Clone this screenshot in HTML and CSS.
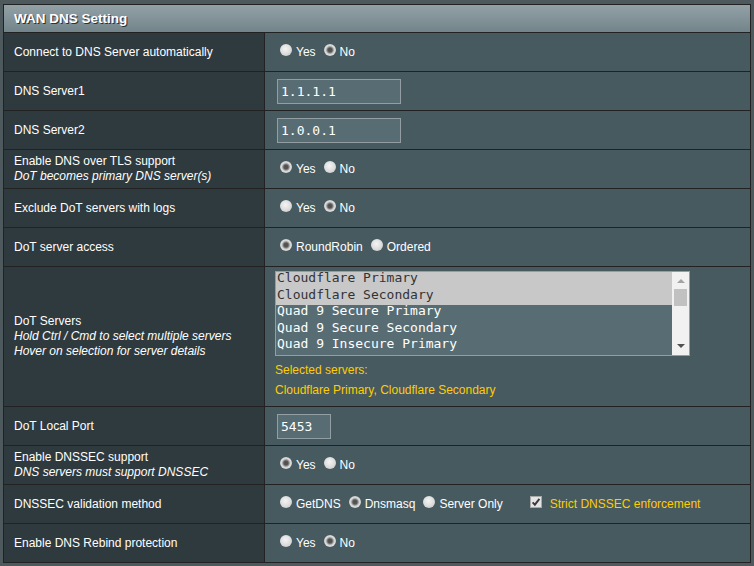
FILE: index.html
```html
<!DOCTYPE html>
<html>
<head>
<meta charset="utf-8">
<title>WAN DNS Setting</title>
<link rel="stylesheet" href="styles.css">
</head>
<body>
<div class="page">
  <div class="form">
    <div class="head">WAN DNS Setting</div>

    <div class="row">
      <div class="lbl">Connect to DNS Server automatically</div>
      <div class="val">
        <label class="opt"><input type="radio" name="auto">Yes</label>
        <label class="opt"><input type="radio" name="auto" checked>No</label>
      </div>
    </div>

    <div class="row">
      <div class="lbl">DNS Server1</div>
      <div class="val"><input class="txt ip" type="text" value="1.1.1.1"></div>
    </div>

    <div class="row">
      <div class="lbl">DNS Server2</div>
      <div class="val"><input class="txt ip" type="text" value="1.0.0.1"></div>
    </div>

    <div class="row">
      <div class="lbl">Enable DNS over TLS support<span class="hint">DoT becomes primary DNS server(s)</span></div>
      <div class="val">
        <label class="opt"><input type="radio" name="dot" checked>Yes</label>
        <label class="opt"><input type="radio" name="dot">No</label>
      </div>
    </div>

    <div class="row">
      <div class="lbl">Exclude DoT servers with logs</div>
      <div class="val">
        <label class="opt"><input type="radio" name="logs">Yes</label>
        <label class="opt"><input type="radio" name="logs" checked>No</label>
      </div>
    </div>

    <div class="row">
      <div class="lbl">DoT server access</div>
      <div class="val">
        <label class="opt"><input type="radio" name="access" checked>RoundRobin</label>
        <label class="opt"><input type="radio" name="access">Ordered</label>
      </div>
    </div>

    <div class="row tall">
      <div class="lbl">DoT Servers<span class="hint">Hold Ctrl / Cmd to select multiple servers</span><span class="hint">Hover on selection for server details</span></div>
      <div class="val stack">
        <div class="list">
          <div class="items">
            <div class="item sel">Cloudflare Primary</div>
            <div class="item sel">Cloudflare Secondary</div>
            <div class="item">Quad 9 Secure Primary</div>
            <div class="item">Quad 9 Secure Secondary</div>
            <div class="item">Quad 9 Insecure Primary</div>
          </div>
          <div class="sb">
            <span class="arrow-up"></span>
            <span class="thumb"></span>
            <span class="arrow-down"></span>
          </div>
        </div>
        <div class="note">Selected servers:</div>
        <div class="note">Cloudflare Primary, Cloudflare Secondary</div>
      </div>
    </div>

    <div class="row">
      <div class="lbl">DoT Local Port</div>
      <div class="val"><input class="txt port" type="text" value="5453"></div>
    </div>

    <div class="row">
      <div class="lbl">Enable DNSSEC support<span class="hint">DNS servers must support DNSSEC</span></div>
      <div class="val">
        <label class="opt"><input type="radio" name="sec" checked>Yes</label>
        <label class="opt"><input type="radio" name="sec">No</label>
      </div>
    </div>

    <div class="row">
      <div class="lbl">DNSSEC validation method</div>
      <div class="val">
        <label class="opt"><input type="radio" name="method">GetDNS</label>
        <label class="opt"><input type="radio" name="method" checked>Dnsmasq</label>
        <label class="opt"><input type="radio" name="method">Server Only</label>
        <label class="check">
          <svg class="box" width="12" height="12" viewBox="0 0 12 12"><rect x="0.5" y="0.5" width="11" height="11" fill="#e4e4e4" stroke="#a8a8a8"/><path d="M2.6 6.3 L4.9 8.7 L9.4 2.9" fill="none" stroke="#3a3a3a" stroke-width="1.9"/></svg>
          <span class="warn">Strict DNSSEC enforcement</span>
        </label>
      </div>
    </div>

    <div class="row last">
      <div class="lbl">Enable DNS Rebind protection</div>
      <div class="val">
        <label class="opt"><input type="radio" name="rebind">Yes</label>
        <label class="opt"><input type="radio" name="rebind" checked>No</label>
      </div>
    </div>
  </div>
</div>
</body>
</html>
```

FILE: styles.css
```css
html, body {
  margin: 0;
  padding: 0;
  background: #4D595D;
}

body {
  font-family: "Liberation Sans", Arial, sans-serif;
  font-size: 12px;
  color: #fff;
}

.page {
  padding: 4px 0 0 3px;
}

.form {
  width: 748px;
  box-sizing: border-box;
  border: 1px solid #222;
}

.head {
  height: 27px;
  display: flex;
  align-items: center;
  padding-left: 10px;
  font-size: 13.5px;
  font-weight: bold;
  color: #fff;
  text-shadow: 1px 1px 0 #2a3236;
  background: linear-gradient(to bottom, #93A1A6, #72848A);
  border-bottom: 1px solid #222;
}

.row {
  display: flex;
  height: 39px;
  box-sizing: border-box;
  border-bottom: 1px solid #222;
}

.row.last {
  height: 38px;
  border-bottom: none;
}

.row.tall {
  height: 140px;
}

.lbl {
  width: 261px;
  box-sizing: border-box;
  border-right: 1px solid #222;
  background: #2F3A3E;
  padding: 0 10px;
  display: flex;
  flex-direction: column;
  justify-content: center;
  line-height: 15px;
}

.hint {
  font-style: italic;
}

.val {
  flex: 1;
  background: #475A5F;
  padding: 0 10px;
  display: flex;
  align-items: center;
}

.opt {
  display: inline-flex;
  align-items: center;
  margin-right: 3px;
  white-space: nowrap;
}

.opt input {
  -webkit-appearance: none;
  appearance: none;
  width: 12px;
  height: 12px;
  margin: 0 4px 4px 5px;
  border-radius: 50%;
  background: radial-gradient(circle at 45% 40%, #f4f4f4 0, #dcdcdc 55%, #bcbcbc 100%);
}

.opt input:checked {
  background: radial-gradient(circle at 50% 50%, #4f4f4f 0, #555 2px, #8a8a8a 3px, #d2d2d2 4.2px, #dedede 5.2px, #c4c4c4 6px);
}

.txt {
  box-sizing: border-box;
  height: 25px;
  margin: 0 0 0 2px;
  padding: 0 3px;
  border: 1px solid #929EA1;
  background: #576D73;
  color: #fff;
  font-family: "DejaVu Sans Mono", "Liberation Mono", monospace;
  font-size: 13px;
  outline: none;
}

.ip {
  width: 124px;
}

.port {
  width: 54px;
}

.val.stack {
  flex-direction: column;
  align-items: flex-start;
  padding: 4px 10px 5px;
}

.list {
  display: flex;
  width: 415px;
  height: 85px;
  box-sizing: border-box;
  border: 1px solid #929EA1;
  background: #576D73;
}

.items {
  flex: 1;
}

.item {
  height: 16.5px;
  line-height: 12px;
  padding-left: 1px;
  font-family: "DejaVu Sans Mono", "Liberation Mono", monospace;
  font-size: 13px;
  color: #fff;
  white-space: pre;
}

.item.sel {
  background: #C8C8C8;
  color: #333;
}

.sb {
  width: 17px;
  background: #F1F1F1;
  display: flex;
  flex-direction: column;
  align-items: center;
  padding-top: 7px;
  box-sizing: border-box;
}

.arrow-up {
  width: 0;
  height: 0;
  border-left: 4px solid transparent;
  border-right: 4px solid transparent;
  border-bottom: 4px solid #A3A3A3;
}

.thumb {
  width: 13px;
  height: 17px;
  margin-top: 6px;
  background: #C1C1C1;
}

.arrow-down {
  width: 0;
  height: 0;
  margin-top: auto;
  margin-bottom: 7px;
  border-left: 4px solid transparent;
  border-right: 4px solid transparent;
  border-top: 4px solid #505050;
}

.note {
  line-height: 20px;
  color: #FFCC00;
}

.list + .note {
  margin-top: 4px;
}

.check {
  display: inline-flex;
  align-items: center;
  margin-left: 24px;
}

.check .box {
  margin: 0 8px 5px 0;
}

.warn {
  color: #FFCC00;
}
```
